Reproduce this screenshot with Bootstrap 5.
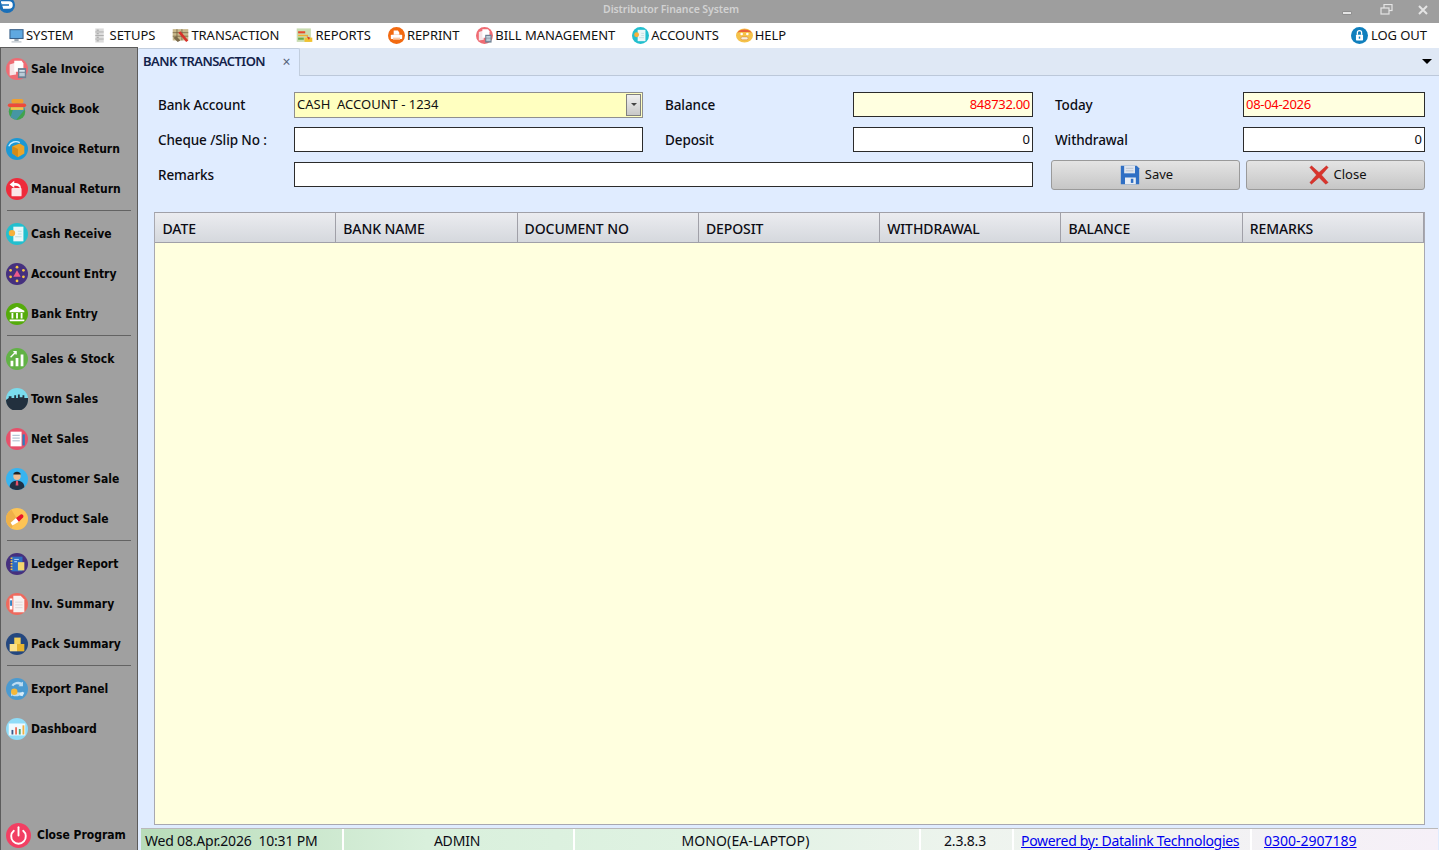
<!DOCTYPE html>
<html lang="en">
<head>
    <meta charset="UTF-8">
    <meta name="viewport" content="width=device-width, initial-scale=1.0">
    <title>Distributor Finance System</title>
    <link href="https://cdn.jsdelivr.net/npm/bootstrap@5.3.0/dist/css/bootstrap.min.css" rel="stylesheet">
    <style>
        html, body { height: 100%; }
        body { font-family: "Noto Sans", "Open Sans", sans-serif; font-size: 13px; color: #0c0c14; background: #e0ecff; overflow: hidden; }

        .title-strip { height: 23px; background: #9e9e9e; color: #d2d2d2; font-size: 10.5px; font-weight: 600; letter-spacing: -.1px; padding-bottom: 4px; }
        .title-strip .app-name { width: 1347px; text-align: center; }
        .win-btns { padding-right: 11px; }
        .win-btns svg:nth-child(1) { margin: 6px 28px 0 0; }
        .win-btns svg:nth-child(2) { margin-right: 25px; }

        .menu-strip { height: 25px; background: #fff; color: #111; padding: 0 12px 0 8px; letter-spacing: -.05px; }
        .menu-item { display: flex; align-items: center; gap: 2px; margin-right: 17px; white-space: nowrap; }
        .menu-item:first-child { gap: 1px; }
        .menu-item svg { width: 17px; height: 17px; flex: none; }
        .menu-item.last { margin-right: 0; gap: 3px; }

        .work-area { height: 802px; }
        .side-bar { width: 138px; flex: none; background: #a0a0a0; border-left: 1px solid #5c5c5c; border-right: 1px solid #5c5c5c; border-top: 1px solid #5c5c5c; margin-top: -1px; padding: 1px 6px 0 5px; font-family: "DejaVu Sans Condensed", "DejaVu Sans", sans-serif; font-weight: 700; font-size: 12px; color: #050505; }
        .side-item { height: 40px; display: flex; align-items: center; gap: 3px; white-space: nowrap; }
        .side-item svg { width: 22px; height: 22px; flex: none; }
        .side-sep { height: 1px; background: #636363; margin: 1px 0 3px 1px; }
        .side-item.quit { gap: 6px; height: 30px; }
        .side-item.quit svg { width: 25px; height: 25px; }

        .tab-strip { height: 28px; background: #dfe8f5; border-bottom: 1px solid #bcc8da; padding-right: 4px; }
        .doc-tab { width: 162px; height: 28px; background: #e0ecff; border: 1px solid #c2cede; border-bottom: 0; border-left: 0; border-radius: 2px 2px 0 0; padding: 0 9px 0 5px; font-weight: 600; font-size: 13px; color: #12224a; letter-spacing: -.55px; }
        .tab-x { color: #55627a; font-size: 14px; font-weight: 400; line-height: 1; }
        .tab-caret { width: 0; height: 0; border-left: 5px solid transparent; border-right: 5px solid transparent; border-top: 5px solid #000; }

        .form-area { padding: 16px 14px 0 16px; }
        .field-row { height: 25px; margin-bottom: 10px; }
        .field-label { font-weight: 500; font-size: 13.5px; letter-spacing: -.1px; white-space: nowrap; padding-top: 2px; }
        .lbl-a { width: 140px; padding-left: 4px; flex: none; }
        .lbl-b { width: 188px; margin-left: 22px; flex: none; }
        .lbl-c { width: 188px; margin-left: 22px; flex: none; }
        .box { height: 25px; border: 1px solid #2b2b2b; background: #fff; padding: 0 2px; font-size: 13px; line-height: 23px; flex: none; }
        .box-a { width: 349px; }
        .box-b { width: 180px; }
        .box-c { width: 182px; }
        .box-wide { width: 739px; }
        .box-cream { background: #ffffe0; color: #f00; letter-spacing: -.3px; }
        .box-combo { height: 26px; background: #ffffc0; border-color: #8f8f8f; border-width: 1px; position: relative; color: #111; }
        .combo-arrow { position: absolute; right: 1px; top: 1px; width: 15px; height: 22px; background: linear-gradient(#f0f0f0, #c8c8c8); border: 1px solid #808080; display: flex; align-items: center; justify-content: center; }
        .combo-arrow::after { content: ""; border-left: 3px solid transparent; border-right: 3px solid transparent; border-top: 3px solid #444; }

        .btn-win { height: 30px; background: linear-gradient(#e4e4e4, #c6c6c6); border: 1px solid #9a9a9a; border-radius: 3px; color: #111; font-size: 13px; padding: 1px 0 0; gap: 5px; flex: none; }
        .btn-win:hover { background: linear-gradient(#e4e4e4, #c6c6c6); border-color: #9a9a9a; color: #111; }
        .btn-win svg { width: 20px; height: 20px; }
        .btn-save { width: 189px; margin-left: 18px; margin-right: 6px; padding-left: 2px; }
        .btn-close-win { width: 179px; padding-left: 4px; }

        .grid-wrap { margin: 15px 15px 0 16px; border: 1px solid #a8a8b0; border-top-color: #a0a0a8; height: 614px; background: #ffffdf; }
        .grid-head { height: 30px; background: linear-gradient(#ebecf0, #d5d8dd); border-bottom: 1px solid #a0a0a8; font-weight: 500; font-size: 14px; letter-spacing: -.1px; line-height: 31px; }
        .grid-col { width: 181.3px; padding-left: 7px; border-right: 1px solid #a0a0a8; flex: none; }
        .grid-col:first-child { padding-left: 7.500px; }

        .status-strip { height: 22px; margin: 3px 2px 0 3px; border-top: 1px solid #b9b9b9; background: linear-gradient(90deg, #b8dcb9 0%, #d9f0dc 22%, #dff2e2 42%, #eef4ee 65%, #f6f0f8 100%); font-size: 14px; line-height: 24px; white-space: nowrap; letter-spacing: -.2px; overflow: hidden; }
        .status-cell { height: 21px; border-right: 2px solid #fff; flex: none; padding-left: 4px; }
        .status-cell.mid { padding: 0 3px 0 0; text-align: center; }
        .status-cell a { color: #0000ee; letter-spacing: -.3px; }
        .cell-date { width: 203px; }
        .cell-user { width: 231px; }
        .status-cell.cell-host { width: 346px; letter-spacing: .1px; }
        .cell-ver { width: 93px; }
        .status-cell.cell-link { width: 238px; padding-left: 7px; }
        .status-cell.cell-phone { width: 180px; padding-left: 12px; border-right: 0; }
        .status-cell.cell-phone a { letter-spacing: 0; }
    </style>
</head>
<body>
    <!-- icons -->
    <svg width="0" height="0" class="position-absolute">
        <defs>
            <symbol id="ic-sale" viewBox="0 0 24 24"><circle cx="12" cy="12" r="12" fill="#ef6b73"/><path d="M4 7l7-2v13l-7 1z" fill="#f6e3e6"/><path d="M9 3h8l2 3v9H9z" fill="#fff"/><rect x="13" y="11" width="9" height="11" fill="#6d7f92"/><rect x="14.500" y="13" width="6" height="2" fill="#d6e6ee"/><rect x="14.500" y="16" width="6" height="4" fill="#b9cbd6"/></symbol>
            <symbol id="ic-book" viewBox="0 0 24 24"><circle cx="12" cy="15" r="9" fill="#3fa34d"/><path d="M9 8h10l2 4-10 12-6-3z" fill="#4a90c8" opacity=".7"/><rect x="6" y="1" width="13" height="5" rx="2" fill="#f0a030"/><rect x="2" y="6" width="20" height="4" rx="2" fill="#ee4a3a"/><rect x="5" y="10" width="14" height="3" fill="#f5c34a"/></symbol>
            <symbol id="ic-invret" viewBox="0 0 24 24"><circle cx="12" cy="12" r="12" fill="#1c98d4"/><path d="M7 9l8-3 5 3v8l-7 4-6-4z" fill="#eda428"/><path d="M7 9l6 3v9l-6-4z" fill="#d58a17"/><path d="M3 9c2-5 8-6 12-4" fill="none" stroke="#cfeeff" stroke-width="1.500"/></symbol>
            <symbol id="ic-manret" viewBox="0 0 24 24"><circle cx="12" cy="12" r="12" fill="#ee2b3b"/><rect x="6" y="11" width="11" height="9" rx="1" fill="#fbe6e8"/><path d="M9 3L4 7l5 4V8.500c4-.5 6 1 7 4 1-5-2-7-7-7z" fill="#fff"/></symbol>
            <symbol id="ic-cash" viewBox="0 0 24 24"><circle cx="12" cy="12" r="12" fill="#22bfce"/><rect x="8" y="4" width="11" height="16" fill="#eaf7f8"/><path d="M10 15h7M13 12h4M13 9h4" stroke="#b9d8dc"/><circle cx="6.500" cy="11" r="3.500" fill="#f6b03a"/></symbol>
            <symbol id="ic-acct" viewBox="0 0 24 24"><circle cx="12" cy="12" r="12" fill="#45307e"/><circle cx="12" cy="4.500" r="1.500" fill="#f5c542"/><circle cx="5" cy="8" r="1.500" fill="#f5c542"/><circle cx="19" cy="8" r="1.500" fill="#f5c542"/><circle cx="5" cy="15" r="1.500" fill="#f5c542"/><circle cx="19" cy="15" r="1.500" fill="#f5c542"/><circle cx="12" cy="19.500" r="1.500" fill="#f5c542"/><path d="M12 8l4 7H8z" fill="#ee5a8a"/></symbol>
            <symbol id="ic-bank" viewBox="0 0 24 24"><circle cx="12" cy="12" r="12" fill="#55ab0b"/><path d="M12 4l8 4.500v1.500H4V8.500z" fill="#fff"/><path d="M6 11h2v6H6zM11 11h2v6h-2zM16 11h2v6h-2zM4 18h16v2H4z" fill="#fff"/></symbol>
            <symbol id="ic-stock" viewBox="0 0 24 24"><circle cx="12" cy="12" r="12" fill="#62b246"/><path d="M5 14h3v6H5zM10.500 11h3v9h-3zM16 7h3v13h-3z" fill="#fff"/><path d="M5 10l6-6M8 4h3v3" fill="none" stroke="#fff" stroke-width="1.500"/></symbol>
            <symbol id="ic-town" viewBox="0 0 24 24"><circle cx="12" cy="12" r="12" fill="#7adced"/><path d="M0 13L3 11V9H6V11H9V8H11V11H13V7H15V10H18V8H20V11H24V13A12 12 0 0 1 0 13z" fill="#22303e"/></symbol>
            <symbol id="ic-net" viewBox="0 0 24 24"><circle cx="12" cy="12" r="12" fill="#e6506a"/><rect x="5" y="4" width="12" height="16" fill="#fff"/><path d="M7 8h8M7 11h8M7 14h8" stroke="#9fb4c6"/><rect x="18" y="7" width="2.500" height="12" fill="#2a7fc0"/></symbol>
            <symbol id="ic-cust" viewBox="0 0 24 24"><circle cx="12" cy="12" r="12" fill="#37b4f0"/><circle cx="12" cy="9" r="4" fill="#eebd94"/><path d="M8 7c0-4 8-4 8 0z" fill="#222"/><path d="M4 21c0-5 4-7 8-7s8 2 8 7a12 12 0 0 1-16 0z" fill="#1f3145"/><path d="M11 14h2l.5 5h-3z" fill="#e6506a"/></symbol>
            <symbol id="ic-prod" viewBox="0 0 24 24"><circle cx="12" cy="12" r="12" fill="#fdc455"/><path d="M0 12a12 12 0 0 1 6-10l6 10-6 10a12 12 0 0 1-6-10z" fill="#eeb048"/><path d="M7 19l-2-3 6-5 3 4z" fill="#fff"/><path d="M11 11l5-4c3-1 4 3 2 4l-4 4z" fill="#e8112d"/></symbol>
            <symbol id="ic-ledger" viewBox="0 0 24 24"><circle cx="12" cy="12" r="12" fill="#45307e"/><rect x="6" y="4" width="12" height="16" fill="#2d6fc4"/><path d="M6 5v14" stroke="#f5c542" stroke-width="2" stroke-dasharray="1.500 1.500"/><rect x="13" y="10" width="7" height="9" fill="#f5d76e"/><path d="M9 7h5M9 9.500h3" stroke="#bfe0ff"/></symbol>
            <symbol id="ic-inv" viewBox="0 0 24 24"><circle cx="12" cy="12" r="12" fill="#ee6a5e"/><path d="M8 3h8l4 4v14H8z" fill="#f7f2f2"/><rect x="4" y="6" width="3" height="12" fill="#fff"/><rect x="4.500" y="8" width="2" height="6" fill="#2a7fc0"/><path d="M10 10h8M10 13h8M10 16h8" stroke="#dcd5d5"/></symbol>
            <symbol id="ic-pack" viewBox="0 0 24 24"><circle cx="12" cy="12" r="12" fill="#24477f"/><path d="M9 5h7v7H9z" fill="#f6d25a"/><path d="M4 12h8v8H4z" fill="#fbe08a"/><path d="M12 12h8v8h-8z" fill="#e8b530"/></symbol>
            <symbol id="ic-export" viewBox="0 0 24 24"><circle cx="12" cy="12" r="12" fill="#4b9ad0"/><path d="M6 8c2-4 8-5 11-3l1.500-1v5h-5l1.500-1.500c-2-1-5-1-7 1.500zM18 16c-2 4-8 5-11 3l-1.500 1v-5" fill="#bcdcf2"/><path d="M15 16c1 0 2-.5 3-1l2 1-2 4-3-1z" fill="#d8ecf8"/><circle cx="9" cy="15" r="3.500" fill="#f5b83a"/></symbol>
            <symbol id="ic-dash" viewBox="0 0 24 24"><circle cx="12" cy="12" r="12" fill="#8fdcf8"/><rect x="3" y="6" width="18" height="13" fill="#eefaff"/><path d="M6 13h2v5H6z" fill="#3a5a8a"/><path d="M10 10h2v8h-2z" fill="#e8705a"/><path d="M14 12h2v6h-2z" fill="#4aa870"/><path d="M18 8h2v10h-2z" fill="#f0b040"/></symbol>
            <symbol id="ic-power" viewBox="0 0 24 24"><circle cx="12" cy="12" r="12" fill="#f23f63"/><path d="M7.500 7.500a7 7 0 1 0 9 0" fill="none" stroke="#fff" stroke-width="1.800" stroke-linecap="round"/><path d="M12 4v8" stroke="#fff" stroke-width="1.800" stroke-linecap="round"/></symbol>

            <symbol id="ic-monitor" viewBox="0 0 24 24"><rect x="2" y="3" width="20" height="14" fill="#38608a"/><rect x="3.500" y="4.500" width="17" height="11" fill="#5fa8e0"/><path d="M9 17h6v3H9z" fill="#9aa6b0"/><path d="M5 20h14v2H5z" fill="#c4ccd2"/></symbol>
            <symbol id="ic-server" viewBox="0 0 24 24"><path d="M6 2h12v20H6z" fill="#dcdcdc"/><path d="M6 7h12M6 12h12M6 17h12" stroke="#9c9c9c"/><path d="M8 4.500h3M8 9.500h3M8 14.500h3M8 19.500h3" stroke="#8a8a8a"/></symbol>
            <symbol id="ic-map" viewBox="0 0 24 24"><path d="M1 3h22v16H1z" fill="#c9b98c"/><path d="M1 8h22M1 13h22M7 3v16M14 3v16" stroke="#6a5a3a"/><path d="M9 8l11 13 3-2L12 6z" fill="#d8322a"/><path d="M2 15l6 6 4-2-6-6z" fill="#7a6a4a"/></symbol>
            <symbol id="ic-report" viewBox="0 0 24 24"><rect x="1" y="2" width="20" height="19" fill="#c9dcb0"/><path d="M3 6h10v3H3z" fill="#e84a2a"/><path d="M3 11h14v2H3z" fill="#f0b030"/><path d="M3 15h8v3H3z" fill="#6aa84a"/><path d="M12 15h11v6H12z" fill="#f2c22e"/><path d="M15 13l5 2-2 3z" fill="#d83a2a"/></symbol>
            <symbol id="ic-reprint" viewBox="0 0 24 24"><circle cx="12" cy="12" r="12" fill="#f26a11"/><path d="M8 5h6l2 3v3H8z" fill="#fff"/><rect x="4" y="11" width="16" height="6" rx="1" fill="#fff"/><rect x="7" y="15" width="10" height="3" fill="#f9c9a8"/></symbol>
            <symbol id="ic-help" viewBox="0 0 24 24"><ellipse cx="12" cy="12" rx="12" ry="10" fill="#f5c24a"/><path d="M2 8C5 2 19 2 22 8l-3-1H5z" fill="#e8603a"/><circle cx="8" cy="10" r="1.800" fill="#fff"/><circle cx="16" cy="10" r="1.800" fill="#fff"/><rect x="7" y="14" width="10" height="4" rx="2" fill="#f7f0e0" stroke="#c86a2a" stroke-width=".6"/></symbol>
            <symbol id="ic-lock" viewBox="0 0 24 24"><circle cx="12" cy="12" r="12" fill="#0f7fbd"/><rect x="7" y="11" width="10" height="8" rx="1" fill="#fff"/><path d="M9 11V8a3 3 0 0 1 6 0v3" fill="none" stroke="#fff" stroke-width="1.800"/><rect x="11" y="13.500" width="2" height="3" fill="#0f7fbd"/></symbol>

            <symbol id="ic-save" viewBox="0 0 24 24"><path d="M1 1h19l3 3v19H1z" fill="#2f6fc4"/><rect x="5" y="1" width="13" height="9" fill="#dfe5ee"/><path d="M7 4h9M7 7h9" stroke="#b3bdca"/><rect x="6" y="15" width="13" height="8" fill="#e8edf4"/><rect x="13" y="16.500" width="3" height="5" fill="#2f6fc4"/></symbol>
            <symbol id="ic-x" viewBox="0 0 24 24"><path d="M3 1l9 8 9-8 2 2-8 9 8 9-3 2-8-8-9 8-2-2 8-9-8-9z" fill="#d9342c" stroke="#b82a24" stroke-width=".5"/></symbol>
        </defs>
    </svg>

    <div class="title-strip d-flex align-items-center">
        <svg width="16" height="14" viewBox="0 0 16 14" class="position-absolute top-0 start-0"><circle cx="7" cy="5" r="8" fill="#1a6fb8"/><path d="M1 2h8a3 3 0 0 1 0 6H3" fill="#fff" stroke="#fff" stroke-width="1.500"/><path d="M2 5h7" stroke="#1a6fb8" stroke-width="1.500"/></svg>
        <div class="app-name">Distributor Finance System</div>
        <div class="win-btns d-flex align-items-center ms-auto">
            <svg width="10" height="4" viewBox="0 0 10 4"><rect x=".5" y=".5" width="9" height="3" rx="1" fill="#e4e4e4" stroke="#6a6a6a" stroke-width=".6"/></svg>
            <svg width="13" height="11" viewBox="0 0 13 11"><rect x="4" y=".5" width="8" height="6" fill="none" stroke="#e4e4e4" stroke-width="1.200"/><rect x="1" y="4" width="8" height="6" fill="#9e9e9e" stroke="#e4e4e4" stroke-width="1.200"/></svg>
            <svg width="10" height="10" viewBox="0 0 10 10"><path d="M1 1l8 8M9 1l-8 8" stroke="#e4e4e4" stroke-width="2"/></svg>
        </div>
    </div>

    <div class="menu-strip d-flex align-items-center">
        <div class="menu-item"><svg><use href="#ic-monitor"/></svg>SYSTEM</div>
        <div class="menu-item"><svg><use href="#ic-server"/></svg>SETUPS</div>
        <div class="menu-item"><svg><use href="#ic-map"/></svg>TRANSACTION</div>
        <div class="menu-item"><svg><use href="#ic-report"/></svg>REPORTS</div>
        <div class="menu-item"><svg><use href="#ic-reprint"/></svg>REPRINT</div>
        <div class="menu-item"><svg><use href="#ic-sale"/></svg>BILL MANAGEMENT</div>
        <div class="menu-item"><svg><use href="#ic-cash"/></svg>ACCOUNTS</div>
        <div class="menu-item"><svg><use href="#ic-help"/></svg>HELP</div>
        <div class="menu-item last ms-auto"><svg><use href="#ic-lock"/></svg>LOG OUT</div>
    </div>

    <div class="work-area d-flex">
        <aside class="side-bar d-flex flex-column">
            <div class="side-item"><svg><use href="#ic-sale"/></svg>Sale Invoice</div>
            <div class="side-item"><svg><use href="#ic-book"/></svg>Quick Book</div>
            <div class="side-item"><svg><use href="#ic-invret"/></svg>Invoice Return</div>
            <div class="side-item"><svg><use href="#ic-manret"/></svg>Manual Return</div>
            <div class="side-sep"></div>
            <div class="side-item"><svg><use href="#ic-cash"/></svg>Cash Receive</div>
            <div class="side-item"><svg><use href="#ic-acct"/></svg>Account Entry</div>
            <div class="side-item"><svg><use href="#ic-bank"/></svg>Bank Entry</div>
            <div class="side-sep"></div>
            <div class="side-item"><svg><use href="#ic-stock"/></svg>Sales &amp; Stock</div>
            <div class="side-item"><svg><use href="#ic-town"/></svg>Town Sales</div>
            <div class="side-item"><svg><use href="#ic-net"/></svg>Net Sales</div>
            <div class="side-item"><svg><use href="#ic-cust"/></svg>Customer Sale</div>
            <div class="side-item"><svg><use href="#ic-prod"/></svg>Product Sale</div>
            <div class="side-sep"></div>
            <div class="side-item"><svg><use href="#ic-ledger"/></svg>Ledger Report</div>
            <div class="side-item"><svg><use href="#ic-inv"/></svg>Inv. Summary</div>
            <div class="side-item"><svg><use href="#ic-pack"/></svg>Pack Summary</div>
            <div class="side-sep"></div>
            <div class="side-item"><svg><use href="#ic-export"/></svg>Export Panel</div>
            <div class="side-item"><svg><use href="#ic-dash"/></svg>Dashboard</div>
            <div class="side-item quit mt-auto"><svg><use href="#ic-power"/></svg>Close Program</div>
        </aside>

        <main class="flex-grow-1 d-flex flex-column">
            <div class="tab-strip d-flex align-items-center justify-content-between">
                <div class="doc-tab d-flex align-items-center justify-content-between">
                    <span>BANK TRANSACTION</span><span class="tab-x">×</span>
                </div>
                <div class="tab-caret me-1"></div>
            </div>

            <div class="form-area">
                <div class="field-row d-flex align-items-center">
                    <div class="field-label lbl-a">Bank Account</div>
                    <div class="box box-a box-combo">CASH &nbsp;ACCOUNT - 1234<span class="combo-arrow"></span></div>
                    <div class="field-label lbl-b">Balance</div>
                    <div class="box box-b box-cream text-end">848732.00</div>
                    <div class="field-label lbl-c">Today</div>
                    <div class="box box-c box-cream">08-04-2026</div>
                </div>
                <div class="field-row d-flex align-items-center">
                    <div class="field-label lbl-a">Cheque /Slip No :</div>
                    <div class="box box-a"></div>
                    <div class="field-label lbl-b">Deposit</div>
                    <div class="box box-b text-end">0</div>
                    <div class="field-label lbl-c">Withdrawal</div>
                    <div class="box box-c text-end">0</div>
                </div>
                <div class="field-row d-flex align-items-center">
                    <div class="field-label lbl-a">Remarks</div>
                    <div class="box box-wide"></div>
                    <button class="btn btn-win btn-save d-flex align-items-center justify-content-center"><svg><use href="#ic-save"/></svg>Save</button>
                    <button class="btn btn-win btn-close-win d-flex align-items-center justify-content-center"><svg><use href="#ic-x"/></svg>Close</button>
                </div>
            </div>

            <div class="grid-wrap">
                <div class="grid-head d-flex">
                    <div class="grid-col">DATE</div>
                    <div class="grid-col">BANK NAME</div>
                    <div class="grid-col">DOCUMENT NO</div>
                    <div class="grid-col">DEPOSIT</div>
                    <div class="grid-col">WITHDRAWAL</div>
                    <div class="grid-col">BALANCE</div>
                    <div class="grid-col">REMARKS</div>
                </div>
            </div>

            <div class="status-strip d-flex">
                <div class="status-cell cell-date">Wed 08.Apr.2026 &nbsp;10:31 PM</div>
                <div class="status-cell mid cell-user">ADMIN</div>
                <div class="status-cell mid cell-host">MONO(EA-LAPTOP)</div>
                <div class="status-cell mid cell-ver">2.3.8.3</div>
                <div class="status-cell cell-link"><a href="#">Powered by: Datalink Technologies</a></div>
                <div class="status-cell cell-phone"><a href="#">0300-2907189</a></div>
            </div>
        </main>
    </div>

    <script src="https://cdn.jsdelivr.net/npm/bootstrap@5.3.0/dist/js/bootstrap.bundle.min.js"></script>
</body>
</html>
